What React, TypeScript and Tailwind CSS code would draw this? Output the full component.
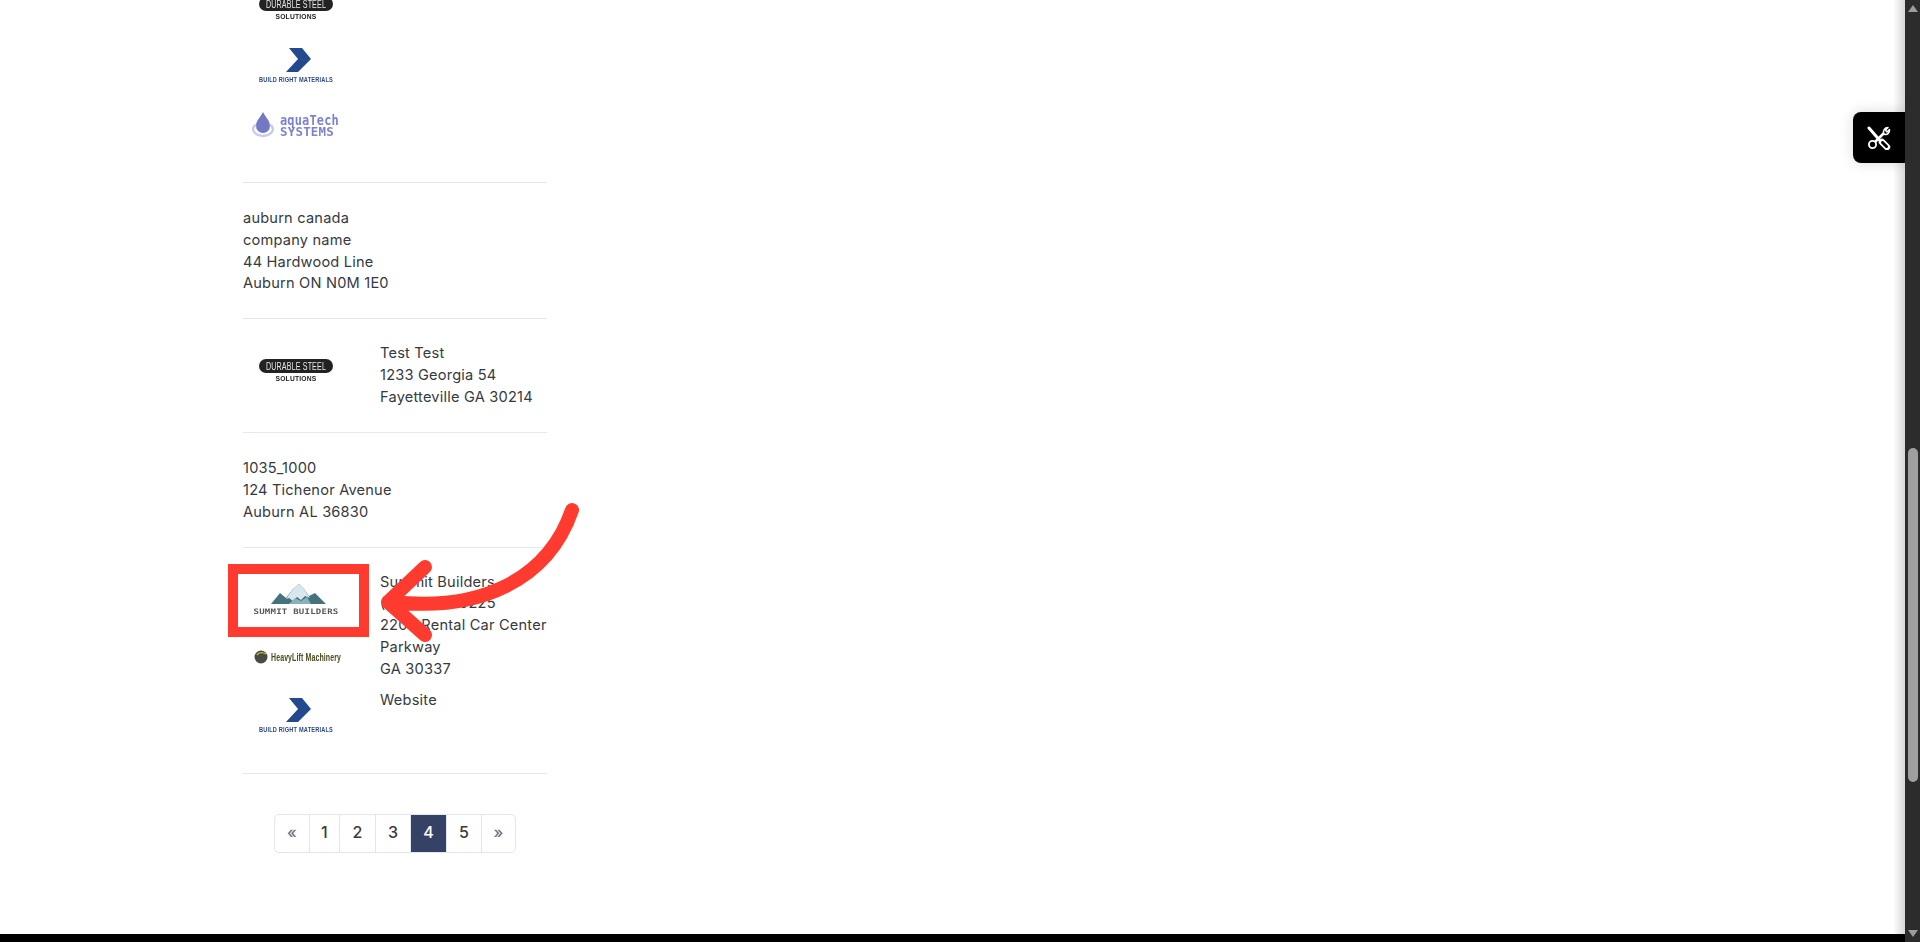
import React from "react";

const font = "font-['Inter','Liberation_Sans',sans-serif]";

function Durable() {
  return (
    <svg width="106" height="62" viewBox="0 0 106 62" className="block blur-[0.3px]">
      <rect x="16" y="16" width="74" height="14" rx="7" fill="#222222" />
      <text x="53" y="26.5" textAnchor="middle" fontSize="10" fill="#e8e8e8" fontFamily="Liberation Sans" textLength="60" lengthAdjust="spacingAndGlyphs">DURABLE STEEL</text>
      <text x="53" y="38" textAnchor="middle" fontSize="6.5" fontWeight="700" fill="#222222" fontFamily="Liberation Sans" textLength="41" lengthAdjust="spacingAndGlyphs">SOLUTIONS</text>
    </svg>
  );
}

function BuildRight() {
  return (
    <svg width="106" height="56" viewBox="0 0 106 56" className="block blur-[0.3px]">
      <polygon points="46,5 59,5 68,16 55,29 43,29 55,16" fill="#234a8f" />
      <text x="53" y="38.5" textAnchor="middle" fontSize="6.5" fontWeight="700" fill="#2c4a85" fontFamily="Liberation Sans" textLength="74" lengthAdjust="spacingAndGlyphs">BUILD RIGHT MATERIALS</text>
    </svg>
  );
}

function Aquatech() {
  return (
    <svg width="106" height="53" viewBox="0 0 106 53" className="block blur-[0.3px]">
      <path d="M20 7 C24 14 27 16 27 21 A7 7 0 0 1 13 21 C13 16 16 14 20 7 Z" fill="#7479c4" />
      <path d="M13 20 C8 22 9 30 20 31 C31 30 32 22 27 20" fill="none" stroke="#c9cbea" strokeWidth="2.5" />
      <text x="37" y="19.5" fontSize="14" fontWeight="700" fill="#7d82cc" fontFamily="DejaVu Sans Mono" textLength="59" lengthAdjust="spacingAndGlyphs">aquaTech</text>
      <text x="37" y="31" fontSize="11.5" fontWeight="700" fill="#7d82cc" fontFamily="DejaVu Sans Mono" textLength="54" lengthAdjust="spacingAndGlyphs">SYSTEMS</text>
    </svg>
  );
}

function Summit() {
  return (
    <svg width="106" height="61" viewBox="0 0 106 61" className="block blur-[0.3px]">
      <polygon points="28,32 37,21 43,26 50,17 56,12 61,17 66,24 72,21 83,32" fill="#44737f" />
      <polygon points="43,27 50,17 56,12 61,17 67,26 62,24 58,28 54,25 50,29 46,26" fill="#d6e8ed" />
      <polygon points="46,32 52,26 58,29 64,25 68,32" fill="#8ab0ba" />
      <text x="53" y="42" textAnchor="middle" fontSize="7.5" fontWeight="700" fill="#55585c" fontFamily="DejaVu Sans Mono" textLength="85" lengthAdjust="spacingAndGlyphs">SUMMIT BUILDERS</text>
    </svg>
  );
}

function Heavy() {
  return (
    <svg width="106" height="60" viewBox="0 0 106 60" className="block blur-[0.3px]">
      <circle cx="18" cy="24" r="6.5" fill="#4a4a44" />
      <path d="M14 22 C16 19 20 19 23 21" stroke="#c9b52e" strokeWidth="1.4" fill="none" />
      <text x="28" y="28" fontSize="11" fontWeight="700" fill="#4a4a20" fontFamily="Liberation Sans" textLength="70" lengthAdjust="spacingAndGlyphs">HeavyLift Machinery</text>
    </svg>
  );
}

function Pagination() {
  const items = [
    { t: "«", w: "w-[36px]", c: "text-[#6b7280] rounded-l-[5px]" },
    { t: "1", w: "w-[31px]", c: "" },
    { t: "2", w: "w-[37px]", c: "" },
    { t: "3", w: "w-[36px]", c: "" },
    { t: "4", w: "w-[37px]", c: "bg-[#364265] text-white" },
    { t: "5", w: "w-[36px]", c: "" },
    { t: "»", w: "w-[35px]", c: "text-[#6b7280] rounded-r-[5px]" },
  ];
  return (
    <div className="flex justify-center mt-[40px] w-[304px]">
      <div className="flex h-[39px] pl-px">
        {items.map((it) => (
          <div
            key={it.t}
            className={`flex items-center justify-center border border-[#e3e6ee] -ml-px text-[16px] font-medium text-[#3a3a3a] ${it.w} ${it.c}`}
          >
            {it.t}
          </div>
        ))}
      </div>
    </div>
  );
}

export default function App() {
  return (
    <div className={`flex h-[942px] w-full overflow-hidden bg-black ${font}`}>
      <div className="flex-1 flex flex-col min-w-0">
        <main className="relative h-[934px] bg-white overflow-hidden pl-[243px] text-[14.6px] leading-[21.75px] tracking-[0.2px] text-[#353a40]">
          <div className="w-[304px]">
            <div className="flex flex-col pb-[24px] border-b border-[#e6e8ee] -mt-[19px]">
              <Durable />
              <BuildRight />
              <div className="mt-[6px]">
                <Aquatech />
              </div>
            </div>
            <div className="pt-[25px] pb-[23px] border-b border-[#e6e8ee]">
              <div>auburn canada</div>
              <div>company name</div>
              <div>44 Hardwood Line</div>
              <div>Auburn ON N0M 1E0</div>
            </div>
            <div className="flex gap-[31px] py-[24px] border-b border-[#e6e8ee]">
              <div className="w-[106px] h-[65.25px]">
                <Durable />
              </div>
              <div>
                <div>Test Test</div>
                <div>1233 Georgia 54</div>
                <div>Fayetteville GA 30214</div>
              </div>
            </div>
            <div className="pt-[25px] pb-[23px] border-b border-[#e6e8ee]">
              <div>1035_1000</div>
              <div>124 Tichenor Avenue</div>
              <div>Auburn AL 36830</div>
            </div>
            <div className="flex gap-[31px] py-[24px] border-b border-[#e6e8ee]">
              <div className="w-[106px] shrink-0">
                <Summit />
                <Heavy />
                <BuildRight />
              </div>
              <div>
                <div>Summit Builders</div>
                <div>(404) 684-0225</div>
                <div>2200 Rental Car Center Parkway</div>
                <div>GA 30337</div>
                <div className="mt-[10px]">Website</div>
              </div>
            </div>
            <Pagination />
          </div>

          <div className="absolute left-[228px] top-[564px] w-[141px] h-[73px] border-[10px] border-[#ff3b30]" />
          <svg className="absolute left-0 top-0 pointer-events-none" width="700" height="700" viewBox="0 0 700 700">
            <path
              d="M572 510 C 548 580, 480 612, 392 602 M425 567 L388 602 L425 635"
              fill="none"
              stroke="#ff3b30"
              strokeWidth="14"
              strokeLinecap="round"
              strokeLinejoin="round"
            />
          </svg>

          <div className="absolute right-0 top-0 bottom-0 w-[12px] bg-gradient-to-r from-transparent to-[#d8d8d8]" />
          <div className="absolute right-0 top-[112px] w-[52px] h-[51px] bg-black rounded-l-[8px] shadow-[0_0_14px_rgba(0,0,0,0.15)] flex items-center justify-center">
            <svg width="24" height="24" viewBox="0 0 24 24" fill="none" stroke="white" strokeLinecap="round" strokeLinejoin="round">
              <path d="M2 2 L12 13.5" strokeWidth="3" />
              <path d="M15 16 L20 21" strokeWidth="6.5" />
              <path d="M15.5 16.5 L19.5 20.5" strokeWidth="3" stroke="black" />
              <path d="M8 16 L17 7" strokeWidth="2.6" />
              <circle cx="5.5" cy="18.5" r="3.6" strokeWidth="1.8" fill="black" />
              <path d="M17 8 C15.5 5 17.5 1.5 21 1.5 L18.5 4 L20 6 L22.5 3.5 C23 7 20 9.5 17 8 Z" strokeWidth="1.5" fill="black" />
            </svg>
          </div>
        </main>
      </div>
      <aside className="w-[15px] shrink-0 bg-[#2c2c2c] flex flex-col items-center">
        <div className="mt-[5px] w-0 h-0 border-x-[5px] border-x-transparent border-b-[7px] border-b-[#9c9c9c]" />
        <div className="mt-[436px] w-[10px] h-[334px] rounded-[5px] bg-[#9f9f9f]" />
        <div className="mt-[148px] w-0 h-0 border-x-[5px] border-x-transparent border-t-[7px] border-t-[#9c9c9c]" />
      </aside>
    </div>
  );
}
